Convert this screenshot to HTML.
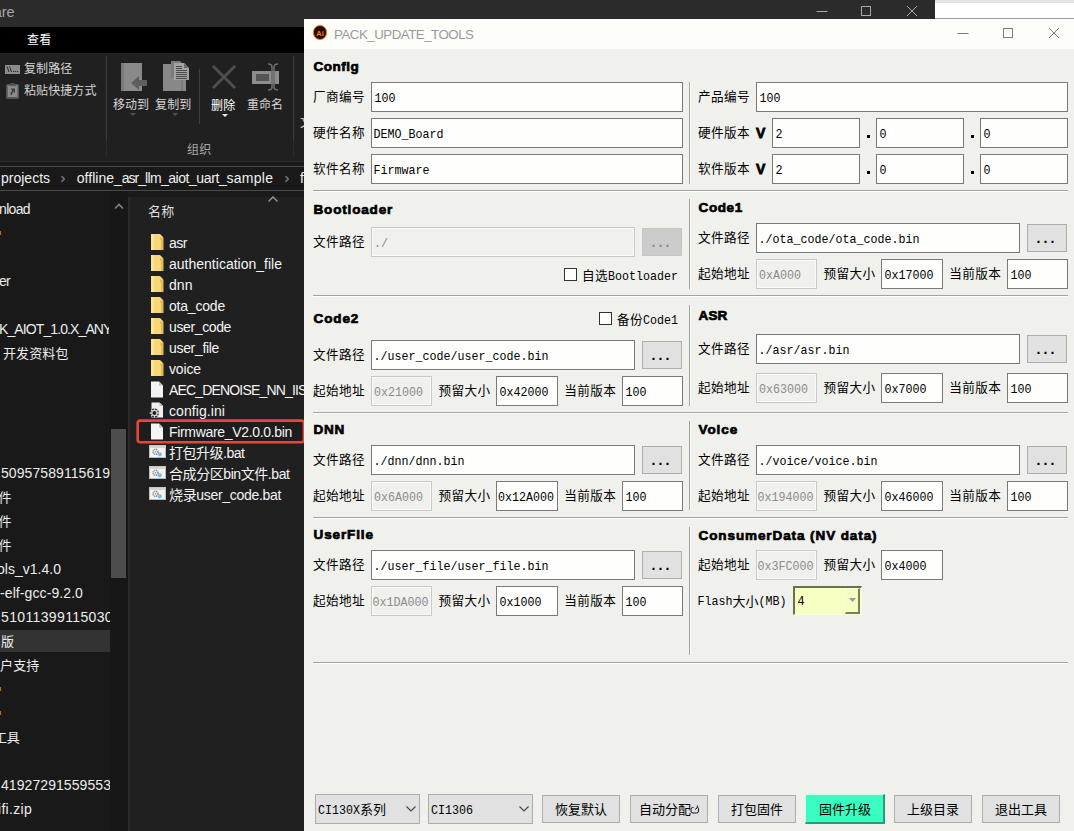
<!DOCTYPE html><html lang="zh-CN"><head><meta charset="utf-8"><title>PACK_UPDATE_TOOLS</title><style>
html,body{margin:0;padding:0}
body{width:1074px;height:831px;overflow:hidden;position:relative;background:#202020;font-family:"Liberation Sans","Noto Sans CJK SC",sans-serif}
.a{position:absolute;box-sizing:border-box}
.t{position:absolute;white-space:pre;line-height:20px;height:20px}
</style></head><body>
<div class="a" style="left:0px;top:0px;width:935px;height:27px;background:#2b2b2b;"></div>
<div class="a" style="left:935px;top:0px;width:139px;height:3px;background:#e4e4e4;"></div>
<div class="a" style="left:935px;top:3px;width:139px;height:15px;background:#ffffff;"></div>
<div class="a" style="left:935px;top:18px;width:139px;height:1px;background:#9b9b9b;"></div>
<div class="t" style="left:-6.3px;top:2.00px;font:400 14.5px/20px 'Liberation Sans','Noto Sans CJK SC',sans-serif;color:#a6a6a6;">are</div>
<svg class="a" style="left:800px;top:0" width="135" height="27" viewBox="0 0 135 27"><g stroke="#a8a8a8" stroke-width="1" fill="none"><path d="M16.5 11.5h11"/><rect x="61.5" y="6.5" width="9" height="9"/><path d="M107 6l10 10M117 6l-10 10"/></g></svg>
<div class="a" style="left:0px;top:27px;width:304px;height:26px;background:#000;"></div>
<div class="t" style="left:27px;top:30.00px;font:400 12px/20px 'Liberation Sans','Noto Sans CJK SC',sans-serif;color:#ffffff;letter-spacing:0.242px;">查看</div>
<div class="a" style="left:0px;top:53px;width:304px;height:108px;background:#202020;"></div>
<div class="a" style="left:0px;top:161px;width:304px;height:1px;background:#2d2d2d;"></div>
<div class="a" style="left:0px;top:162px;width:304px;height:29px;background:#191919;"></div>
<div class="a" style="left:0px;top:166px;width:304px;height:1px;background:#4a4a4a;"></div>
<div class="a" style="left:0px;top:190px;width:304px;height:1px;background:#4a4a4a;"></div>
<div class="a" style="left:106px;top:56px;width:1px;height:84px;background:#3d3d3d;"></div>
<div class="a" style="left:106px;top:140px;width:1px;height:17px;background:#2a2a2a;"></div>
<div class="a" style="left:199px;top:69px;width:1px;height:55px;background:#3d3d3d;"></div>
<div class="a" style="left:293px;top:56px;width:1px;height:84px;background:#3d3d3d;"></div>
<div class="a" style="left:293px;top:140px;width:1px;height:17px;background:#2a2a2a;"></div>
<svg class="a" style="left:5px;top:65px" width="15" height="9" viewBox="0 0 15 9"><rect width="15" height="9" fill="#8c8c8c"/><path d="M2 1.500l2 5.500M4.500 1.500l2 5.500" stroke="#2a2a2a" stroke-width="1"/><path d="M8 6.500h1.200M10 6.500h1.200M12 6.500h1.200" stroke="#2a2a2a" stroke-width="1.200"/></svg>
<div class="t" style="left:24px;top:59.00px;font:400 12px/20px 'Liberation Sans','Noto Sans CJK SC',sans-serif;color:#d6d6d6;letter-spacing:0.121px;">复制路径</div>
<svg class="a" style="left:6px;top:83px" width="14" height="16" viewBox="0 0 14 16"><rect x="0" y="1" width="13" height="15" rx="1.500" fill="#555"/><rect x="4" y="0" width="5" height="2" fill="#4a4a4a"/><rect x="1.700" y="2.200" width="9.700" height="11.800" fill="#8c8c8c"/><rect x="2.700" y="2.200" width="7.500" height="1" fill="#5a5a5a"/><path d="M4.500 5.500h4.500v4.500l-1.500-1.500-2 3.500-1.500-1 2.200-3.400z" fill="#3e3e3e"/></svg>
<div class="t" style="left:24px;top:81.00px;font:400 12px/20px 'Liberation Sans','Noto Sans CJK SC',sans-serif;color:#d6d6d6;letter-spacing:0.081px;">粘贴快捷方式</div>
<svg class="a" style="left:120px;top:60px" width="30" height="32" viewBox="0 0 30 32"><rect x="1" y="3" width="21" height="28" fill="#8a8a8a"/><rect x="1" y="3" width="3" height="28" fill="#7a7a7a"/><path d="M27 20v6h-8v4l-8-7 8-7v4z" fill="#5e5e5e"/></svg>
<div class="t" style="left:113px;top:95.00px;font:400 12px/20px 'Liberation Sans','Noto Sans CJK SC',sans-serif;color:#d6d6d6;letter-spacing:-0.005px;">移动到</div>
<svg class="a" style="left:130px;top:113px" width="7" height="4"><path d="M0 0h6l-3 3z" fill="#505050"/></svg>
<svg class="a" style="left:162px;top:59px" width="30" height="33" viewBox="0 0 30 33"><rect x="1" y="5" width="23" height="27" fill="#888"/><rect x="19.500" y="5" width="1" height="27" fill="#6e6e6e"/><path d="M9 2h9l4 4v13H9z" fill="#7c7c7c"/><path d="M12 4h10l5 5v12H12z" fill="#a2a2a2"/><path d="M22 4v5h5z" fill="#6a6a6a"/><g stroke="#4a4a4a" stroke-width="1"><path d="M14 7.500h6M14 9.500h6M14 11.500h11M14 13.500h11M14 15.500h11M14 17.500h11M14 19.500h11"/></g></svg>
<div class="t" style="left:155px;top:95.00px;font:400 12px/20px 'Liberation Sans','Noto Sans CJK SC',sans-serif;color:#d6d6d6;letter-spacing:0.161px;">复制到</div>
<svg class="a" style="left:172px;top:113px" width="7" height="4"><path d="M0 0h6l-3 3z" fill="#505050"/></svg>
<svg class="a" style="left:210px;top:63px" width="28" height="28" viewBox="0 0 28 28"><path d="M3 3l22 22M25 3L3 25" stroke="#4e4e4e" stroke-width="3" fill="none"/></svg>
<div class="t" style="left:211px;top:96.00px;font:400 12px/20px 'Liberation Sans','Noto Sans CJK SC',sans-serif;color:#ffffff;letter-spacing:0.242px;">删除</div>
<svg class="a" style="left:222px;top:114px" width="7" height="4"><path d="M0 0h6l-3 3z" fill="#f4f4f4"/></svg>
<svg class="a" style="left:250px;top:62px" width="32" height="30" viewBox="0 0 32 30"><rect x="2" y="9" width="27" height="13" fill="#8c8c8c"/><rect x="6" y="12" width="13" height="7" fill="#555"/><path d="M18 2q4 0 4 3v20q0 3-4 3M28 2q-4 0-4 3v20q0 3 4 3" stroke="#6c6c6c" stroke-width="1.6" fill="none"/></svg>
<div class="t" style="left:247px;top:95.00px;font:400 12px/20px 'Liberation Sans','Noto Sans CJK SC',sans-serif;color:#d6d6d6;letter-spacing:-0.005px;">重命名</div>
<div class="t" style="left:187px;top:140.00px;font:400 12px/20px 'Liberation Sans','Noto Sans CJK SC',sans-serif;color:#a8a8a8;letter-spacing:0.242px;">组织</div>
<div class="t" style="left:300px;top:113.00px;font:400 12px/20px 'Liberation Sans','Noto Sans CJK SC',sans-serif;color:#d6d6d6;width:4px;overflow:hidden;">文</div>
<div class="t" style="left:1px;top:168.00px;font:400 14px/20px 'Liberation Sans','Noto Sans CJK SC',sans-serif;color:#f0f0f0;">projects</div>
<svg class="a" style="left:60px;top:174px" width="7" height="10"><path d="M1.500 2.200l2.800 2.800-2.800 2.800" stroke="#777" stroke-width="1.500" fill="none"/></svg>
<div class="t" style="left:76.8px;top:168.00px;font:400 14px/20px 'Liberation Sans','Noto Sans CJK SC',sans-serif;color:#f0f0f0;letter-spacing:0.012px;">offline_</div>
<div class="t" style="left:121.8px;top:168.00px;font:400 14px/20px 'Liberation Sans','Noto Sans CJK SC',sans-serif;color:#f0f0f0;letter-spacing:-1.034px;">asr_</div>
<div class="t" style="left:144.9px;top:168.00px;font:400 14px/20px 'Liberation Sans','Noto Sans CJK SC',sans-serif;color:#f0f0f0;letter-spacing:-0.568px;">llm_</div>
<div class="t" style="left:168.3px;top:168.00px;font:400 14px/20px 'Liberation Sans','Noto Sans CJK SC',sans-serif;color:#f0f0f0;letter-spacing:-0.472px;">aiot_</div>
<div class="t" style="left:196.3px;top:168.00px;font:400 14px/20px 'Liberation Sans','Noto Sans CJK SC',sans-serif;color:#f0f0f0;letter-spacing:-0.364px;">uart_</div>
<div class="t" style="left:226.4px;top:168.00px;font:400 14px/20px 'Liberation Sans','Noto Sans CJK SC',sans-serif;color:#f0f0f0;letter-spacing:0.310px;">sample</div>
<svg class="a" style="left:284px;top:174px" width="7" height="10"><path d="M1.500 2.200l2.800 2.800-2.800 2.800" stroke="#777" stroke-width="1.500" fill="none"/></svg>
<div class="t" style="left:300px;top:168.00px;font:400 14px/20px 'Liberation Sans','Noto Sans CJK SC',sans-serif;color:#f0f0f0;width:4px;overflow:hidden;">f</div>
<div class="a" style="left:0px;top:191px;width:304px;height:6px;background:#191919;"></div>
<div class="a" style="left:0px;top:197px;width:128px;height:634px;background:#191919;"></div>
<div class="a" style="left:110px;top:191px;width:18px;height:640px;background:#171717;"></div>
<div class="a" style="left:128px;top:197px;width:2px;height:634px;background:#2a2a2a;"></div>
<div class="a" style="left:111px;top:429px;width:15px;height:149px;background:#4d4d4d;"></div>
<svg class="a" style="left:113px;top:202px" width="12" height="9"><path d="M2 6.500l4-4 4 4" stroke="#7e7e7e" stroke-width="1.700" fill="none"/></svg>
<div class="a" style="left:0px;top:630px;width:110px;height:22px;background:#333333;"></div>
<div class="t" style="left:-1px;top:199.00px;font:400 14px/20px 'Liberation Sans','Noto Sans CJK SC',sans-serif;color:#ececec;letter-spacing:-0.653px;">nload</div>
<div class="t" style="left:-1px;top:271.00px;font:400 14px/20px 'Liberation Sans','Noto Sans CJK SC',sans-serif;color:#ececec;letter-spacing:-0.727px;">er</div>
<div class="t" style="left:-1px;top:319.00px;font:400 14px/20px 'Liberation Sans','Noto Sans CJK SC',sans-serif;color:#ececec;letter-spacing:-0.896px;width:110px;overflow:hidden;">K_AIOT_1.0.X_ANY</div>
<div class="t" style="left:3px;top:344.00px;font:400 13px/20px 'Liberation Sans','Noto Sans CJK SC',sans-serif;color:#ececec;letter-spacing:0.097px;">开发资料包</div>
<div class="t" style="left:1px;top:463.00px;font:400 14px/20px 'Liberation Sans','Noto Sans CJK SC',sans-serif;color:#ececec;letter-spacing:0.074px;width:109px;overflow:hidden;">50957589115619</div>
<div class="t" style="left:-1.5px;top:488.00px;font:400 13px/20px 'Liberation Sans','Noto Sans CJK SC',sans-serif;color:#ececec;">件</div>
<div class="t" style="left:-1.5px;top:512.00px;font:400 13px/20px 'Liberation Sans','Noto Sans CJK SC',sans-serif;color:#ececec;">件</div>
<div class="t" style="left:-1.5px;top:536.00px;font:400 13px/20px 'Liberation Sans','Noto Sans CJK SC',sans-serif;color:#ececec;">件</div>
<div class="t" style="left:-3px;top:559.00px;font:400 14px/20px 'Liberation Sans','Noto Sans CJK SC',sans-serif;color:#ececec;letter-spacing:0.017px;">ols_v1.4.0</div>
<div class="t" style="left:0px;top:583.00px;font:400 14px/20px 'Liberation Sans','Noto Sans CJK SC',sans-serif;color:#ececec;letter-spacing:0.093px;">-elf-gcc-9.2.0</div>
<div class="t" style="left:1px;top:607.00px;font:400 14px/20px 'Liberation Sans','Noto Sans CJK SC',sans-serif;color:#ececec;letter-spacing:0.362px;width:109px;overflow:hidden;">51011399115030</div>
<div class="t" style="left:1px;top:632.00px;font:400 13px/20px 'Liberation Sans','Noto Sans CJK SC',sans-serif;color:#ececec;">版</div>
<div class="t" style="left:0px;top:656.00px;font:400 13px/20px 'Liberation Sans','Noto Sans CJK SC',sans-serif;color:#ececec;letter-spacing:0.161px;">户支持</div>
<div class="t" style="left:-6px;top:728.00px;font:400 13px/20px 'Liberation Sans','Noto Sans CJK SC',sans-serif;color:#ececec;letter-spacing:-0.258px;">工具</div>
<div class="t" style="left:1px;top:775.00px;font:400 14px/20px 'Liberation Sans','Noto Sans CJK SC',sans-serif;color:#ececec;letter-spacing:0.070px;width:109px;overflow:hidden;">41927291559553</div>
<div class="t" style="left:-2px;top:799.00px;font:400 14px/20px 'Liberation Sans','Noto Sans CJK SC',sans-serif;color:#ececec;letter-spacing:0.299px;">ifi.zip</div>
<div class="a" style="left:0px;top:231px;width:1px;height:4px;background:#c8690d;"></div>
<div class="a" style="left:0px;top:687px;width:1px;height:4px;background:#c8690d;"></div>
<div class="a" style="left:0px;top:711px;width:1px;height:4px;background:#c8690d;"></div>
<div class="a" style="left:0px;top:286px;width:0px;height:0px;"></div>
<div class="t" style="left:148px;top:202.20px;font:400 13px/20px 'Liberation Sans','Noto Sans CJK SC',sans-serif;color:#dedede;letter-spacing:0.242px;">名称</div>
<svg class="a" style="left:267px;top:195px" width="12" height="8"><path d="M1.5 6.500l4.5-4.500L10.500 6.500" stroke="#9a9a9a" stroke-width="1.300" fill="none"/></svg>
<svg class="a" style="left:134px;top:417px" width="172" height="29" viewBox="134 417 172 29"><rect x="137.700" y="420.600" width="166.200" height="21.700" rx="2.500" fill="#1d1d1d" stroke="#e8463d" stroke-width="2.600"/></svg>
<svg class="a" style="left:150px;top:234px" width="14" height="17" viewBox="0 0 14 17"><path d="M1 0h9l3 3v13H1z" fill="#f6d878"/><path d="M10 0v3.500h3.500V16H11V6H10z" fill="#e3bb4e"/><path d="M1 0h3v16H1z" fill="#fbe595"/></svg>
<div class="t" style="left:169px;top:233.00px;font:400 14px/20px 'Liberation Sans','Noto Sans CJK SC',sans-serif;color:#f4f4f4;letter-spacing:-0.484px;">asr</div>
<svg class="a" style="left:150px;top:255px" width="14" height="17" viewBox="0 0 14 17"><path d="M1 0h9l3 3v13H1z" fill="#f6d878"/><path d="M10 0v3.500h3.500V16H11V6H10z" fill="#e3bb4e"/><path d="M1 0h3v16H1z" fill="#fbe595"/></svg>
<div class="t" style="left:169px;top:254.00px;font:400 14px/20px 'Liberation Sans','Noto Sans CJK SC',sans-serif;color:#f4f4f4;letter-spacing:0.007px;">authentication_file</div>
<svg class="a" style="left:150px;top:276px" width="14" height="17" viewBox="0 0 14 17"><path d="M1 0h9l3 3v13H1z" fill="#f6d878"/><path d="M10 0v3.500h3.500V16H11V6H10z" fill="#e3bb4e"/><path d="M1 0h3v16H1z" fill="#fbe595"/></svg>
<div class="t" style="left:169px;top:275.00px;font:400 14px/20px 'Liberation Sans','Noto Sans CJK SC',sans-serif;color:#f4f4f4;letter-spacing:0.047px;">dnn</div>
<svg class="a" style="left:150px;top:297px" width="14" height="17" viewBox="0 0 14 17"><path d="M1 0h9l3 3v13H1z" fill="#f6d878"/><path d="M10 0v3.500h3.500V16H11V6H10z" fill="#e3bb4e"/><path d="M1 0h3v16H1z" fill="#fbe595"/></svg>
<div class="t" style="left:169px;top:296.00px;font:400 14px/20px 'Liberation Sans','Noto Sans CJK SC',sans-serif;color:#f4f4f4;letter-spacing:-0.201px;">ota_code</div>
<svg class="a" style="left:150px;top:318px" width="14" height="17" viewBox="0 0 14 17"><path d="M1 0h9l3 3v13H1z" fill="#f6d878"/><path d="M10 0v3.500h3.500V16H11V6H10z" fill="#e3bb4e"/><path d="M1 0h3v16H1z" fill="#fbe595"/></svg>
<div class="t" style="left:169px;top:317.00px;font:400 14px/20px 'Liberation Sans','Noto Sans CJK SC',sans-serif;color:#f4f4f4;letter-spacing:-0.377px;">user_code</div>
<svg class="a" style="left:150px;top:339px" width="14" height="17" viewBox="0 0 14 17"><path d="M1 0h9l3 3v13H1z" fill="#f6d878"/><path d="M10 0v3.500h3.500V16H11V6H10z" fill="#e3bb4e"/><path d="M1 0h3v16H1z" fill="#fbe595"/></svg>
<div class="t" style="left:169px;top:338.00px;font:400 14px/20px 'Liberation Sans','Noto Sans CJK SC',sans-serif;color:#f4f4f4;letter-spacing:-0.325px;">user_file</div>
<svg class="a" style="left:150px;top:360px" width="14" height="17" viewBox="0 0 14 17"><path d="M1 0h9l3 3v13H1z" fill="#f6d878"/><path d="M10 0v3.500h3.500V16H11V6H10z" fill="#e3bb4e"/><path d="M1 0h3v16H1z" fill="#fbe595"/></svg>
<div class="t" style="left:169px;top:359.00px;font:400 14px/20px 'Liberation Sans','Noto Sans CJK SC',sans-serif;color:#f4f4f4;letter-spacing:-0.138px;">voice</div>
<svg class="a" style="left:150px;top:381px" width="14" height="17" viewBox="0 0 14 17"><path d="M1 0.500h8l4 4V16.500H1z" fill="#f4f4f4"/><path d="M9 0.500v4h4z" fill="#bdbdbd"/></svg>
<div class="t" style="left:169px;top:380.00px;font:400 14px/20px 'Liberation Sans','Noto Sans CJK SC',sans-serif;color:#f4f4f4;letter-spacing:-0.833px;width:135px;overflow:hidden;">AEC_DENOISE_NN_IIS</div>
<svg class="a" style="left:147px;top:402px" width="18" height="17" viewBox="0 0 18 17"><path d="M4.500 0.500h8l3.500 3.500V15.500H4.500z" fill="#f0f0f0"/><path d="M12.500 0.500v3.500h3.500z" fill="#bdbdbd"/><circle cx="7.400" cy="11" r="4.600" fill="#202020"/><circle cx="7.400" cy="11" r="2.600" fill="none" stroke="#d4d4d4" stroke-width="1.300"/><path d="M7.400 6.300v2M7.400 13.700v2M2.700 11h2M10.100 11h2M4.100 7.700l1.400 1.400M9.300 12.900l1.400 1.400M10.700 7.700l-1.400 1.400M5.500 12.900l-1.400 1.400" stroke="#d4d4d4" stroke-width="1.300"/></svg>
<div class="t" style="left:169px;top:401.00px;font:400 14px/20px 'Liberation Sans','Noto Sans CJK SC',sans-serif;color:#f4f4f4;letter-spacing:0.073px;">config.ini</div>
<svg class="a" style="left:150px;top:423px" width="14" height="17" viewBox="0 0 14 17"><path d="M1 0.500h8l4 4V16.500H1z" fill="#f4f4f4"/><path d="M9 0.500v4h4z" fill="#bdbdbd"/></svg>
<div class="t" style="left:169px;top:422.00px;font:400 14px/20px 'Liberation Sans','Noto Sans CJK SC',sans-serif;color:#f4f4f4;letter-spacing:-0.325px;">Firmware_V2.0.0.bin</div>
<svg class="a" style="left:149px;top:445px" width="17" height="13" viewBox="0 0 17 13"><rect x="0.500" y="0.500" width="16" height="12" fill="#f3f3f3" stroke="#bcbcbc"/><rect x="0.500" y="0.500" width="16" height="2.500" fill="#d4d4d4"/><circle cx="6.500" cy="6.800" r="2.500" fill="none" stroke="#8e8e8e" stroke-width="1.500" stroke-dasharray="1.300 0.700"/><circle cx="6.500" cy="6.800" r="0.800" fill="#8e8e8e"/><circle cx="10.800" cy="9.300" r="2.100" fill="#79bdec"/></svg>
<div class="t" style="left:169px;top:443.00px;font:400 14px/20px 'Liberation Sans','Noto Sans CJK SC',sans-serif;color:#f4f4f4;letter-spacing:-0.482px;">打包升级.bat</div>
<svg class="a" style="left:149px;top:466px" width="17" height="13" viewBox="0 0 17 13"><rect x="0.500" y="0.500" width="16" height="12" fill="#f3f3f3" stroke="#bcbcbc"/><rect x="0.500" y="0.500" width="16" height="2.500" fill="#d4d4d4"/><circle cx="6.500" cy="6.800" r="2.500" fill="none" stroke="#8e8e8e" stroke-width="1.500" stroke-dasharray="1.300 0.700"/><circle cx="6.500" cy="6.800" r="0.800" fill="#8e8e8e"/><circle cx="10.800" cy="9.300" r="2.100" fill="#79bdec"/></svg>
<div class="t" style="left:169px;top:464.00px;font:400 14px/20px 'Liberation Sans','Noto Sans CJK SC',sans-serif;color:#f4f4f4;letter-spacing:-0.427px;">合成分区bin文件.bat</div>
<svg class="a" style="left:149px;top:487px" width="17" height="13" viewBox="0 0 17 13"><rect x="0.500" y="0.500" width="16" height="12" fill="#f3f3f3" stroke="#bcbcbc"/><rect x="0.500" y="0.500" width="16" height="2.500" fill="#d4d4d4"/><circle cx="6.500" cy="6.800" r="2.500" fill="none" stroke="#8e8e8e" stroke-width="1.500" stroke-dasharray="1.300 0.700"/><circle cx="6.500" cy="6.800" r="0.800" fill="#8e8e8e"/><circle cx="10.800" cy="9.300" r="2.100" fill="#79bdec"/></svg>
<div class="t" style="left:169px;top:485.00px;font:400 14px/20px 'Liberation Sans','Noto Sans CJK SC',sans-serif;color:#f4f4f4;letter-spacing:-0.316px;">烧录user_code.bat</div>
<div class="a" style="left:304px;top:19px;width:770px;height:30px;background:#fdfdfa;"></div>
<div class="a" style="left:304px;top:49px;width:770px;height:782px;background:#f0f0ed;"></div>
<div class="a" style="left:312.700px;top:25.400px;width:14.500px;height:14.500px;border-radius:50%;background:#230b00;border:1.300px solid #ff7a00;"></div>
<div class="t" style="left:316.3px;top:24.20px;font:700 7.5px/20px 'Liberation Sans',sans-serif;color:#ff7f0a;">Ai</div>
<div class="t" style="left:334px;top:24.60px;font:400 13.33px/20px 'Liberation Sans','Noto Sans CJK SC',sans-serif;color:#9a9a9a;letter-spacing:-0.508px;">PACK_UPDATE_TOOLS</div>
<svg class="a" style="left:940px;top:19px" width="134" height="30" viewBox="0 0 134 30"><g stroke="#7d7d7d" stroke-width="1" fill="none"><path d="M17.500 14.500h11"/><rect x="63.500" y="9.500" width="9" height="9"/><path d="M109 9l10 10M119 9l-10 10"/></g></svg>
<div class="t" style="left:313.5px;top:57.40px;font:700 13.5px/20px 'Liberation Sans',sans-serif;color:#000;letter-spacing:0.525px;-webkit-text-stroke:0.700px #000;">Config</div>
<div class="t" style="left:313px;top:88.30px;font:400 12.6px/20px 'Liberation Mono','Noto Sans CJK SC',monospace;color:#000;letter-spacing:0.406px;">厂商编号</div>
<div class="a" style="left:371px;top:82px;width:312px;height:30px;background:#fefefc;border:1px solid #7a7a7a;"></div>
<div class="t" style="left:374.5px;top:88.60px;font:400 11.67px/20px 'Liberation Mono','Noto Sans CJK SC',monospace;color:#000;transform:scaleY(1.16);transform-origin:0 13.00px;">100</div>
<div class="t" style="left:313px;top:124.30px;font:400 12.6px/20px 'Liberation Mono','Noto Sans CJK SC',monospace;color:#000;letter-spacing:0.406px;">硬件名称</div>
<div class="a" style="left:371px;top:118px;width:312px;height:30px;background:#fefefc;border:1px solid #7a7a7a;"></div>
<div class="t" style="left:373.5px;top:124.60px;font:400 11.67px/20px 'Liberation Mono','Noto Sans CJK SC',monospace;color:#000;letter-spacing:0.005px;transform:scaleY(1.16);transform-origin:0 13.00px;">DEMO_Board</div>
<div class="t" style="left:313px;top:160.30px;font:400 12.6px/20px 'Liberation Mono','Noto Sans CJK SC',monospace;color:#000;letter-spacing:0.406px;">软件名称</div>
<div class="a" style="left:371px;top:154px;width:312px;height:30px;background:#fefefc;border:1px solid #7a7a7a;"></div>
<div class="t" style="left:373.5px;top:160.60px;font:400 11.67px/20px 'Liberation Mono','Noto Sans CJK SC',monospace;color:#000;transform:scaleY(1.16);transform-origin:0 13.00px;">Firmware</div>
<div class="a" style="left:689px;top:82px;width:1px;height:102px;background:#a3a3a3;"></div>
<div class="a" style="left:690px;top:82px;width:1px;height:102px;background:#ffffff;"></div>
<div class="t" style="left:698px;top:88.30px;font:400 12.6px/20px 'Liberation Mono','Noto Sans CJK SC',monospace;color:#000;letter-spacing:0.406px;">产品编号</div>
<div class="a" style="left:756px;top:82px;width:312px;height:30px;background:#fefefc;border:1px solid #7a7a7a;"></div>
<div class="t" style="left:759.5px;top:88.60px;font:400 11.67px/20px 'Liberation Mono','Noto Sans CJK SC',monospace;color:#000;transform:scaleY(1.16);transform-origin:0 13.00px;">100</div>
<div class="t" style="left:698px;top:124.30px;font:400 12.6px/20px 'Liberation Mono','Noto Sans CJK SC',monospace;color:#000;letter-spacing:0.406px;">硬件版本</div>
<div class="t" style="left:756px;top:122.60px;font:700 14px/20px 'Liberation Sans',sans-serif;color:#000;letter-spacing:1.156px;-webkit-text-stroke:0.800px #000;">V</div>
<div class="a" style="left:772px;top:118px;width:88px;height:30px;background:#fefefc;border:1px solid #7a7a7a;"></div>
<div class="t" style="left:775.5px;top:124.60px;font:400 11.67px/20px 'Liberation Mono','Noto Sans CJK SC',monospace;color:#000;transform:scaleY(1.16);transform-origin:0 13.00px;">2</div>
<div class="a" style="left:876px;top:118px;width:88px;height:30px;background:#fefefc;border:1px solid #7a7a7a;"></div>
<div class="t" style="left:879.5px;top:124.60px;font:400 11.67px/20px 'Liberation Mono','Noto Sans CJK SC',monospace;color:#000;transform:scaleY(1.16);transform-origin:0 13.00px;">0</div>
<div class="a" style="left:980px;top:118px;width:88px;height:30px;background:#fefefc;border:1px solid #7a7a7a;"></div>
<div class="t" style="left:983.5px;top:124.60px;font:400 11.67px/20px 'Liberation Mono','Noto Sans CJK SC',monospace;color:#000;transform:scaleY(1.16);transform-origin:0 13.00px;">0</div>
<div class="a" style="left:867px;top:135px;width:3px;height:3px;background:#000;"></div>
<div class="a" style="left:971px;top:135px;width:3px;height:3px;background:#000;"></div>
<div class="t" style="left:698px;top:160.30px;font:400 12.6px/20px 'Liberation Mono','Noto Sans CJK SC',monospace;color:#000;letter-spacing:0.406px;">软件版本</div>
<div class="t" style="left:756px;top:158.60px;font:700 14px/20px 'Liberation Sans',sans-serif;color:#000;letter-spacing:1.156px;-webkit-text-stroke:0.800px #000;">V</div>
<div class="a" style="left:772px;top:154px;width:88px;height:30px;background:#fefefc;border:1px solid #7a7a7a;"></div>
<div class="t" style="left:775.5px;top:160.60px;font:400 11.67px/20px 'Liberation Mono','Noto Sans CJK SC',monospace;color:#000;transform:scaleY(1.16);transform-origin:0 13.00px;">2</div>
<div class="a" style="left:876px;top:154px;width:88px;height:30px;background:#fefefc;border:1px solid #7a7a7a;"></div>
<div class="t" style="left:879.5px;top:160.60px;font:400 11.67px/20px 'Liberation Mono','Noto Sans CJK SC',monospace;color:#000;transform:scaleY(1.16);transform-origin:0 13.00px;">0</div>
<div class="a" style="left:980px;top:154px;width:88px;height:30px;background:#fefefc;border:1px solid #7a7a7a;"></div>
<div class="t" style="left:983.5px;top:160.60px;font:400 11.67px/20px 'Liberation Mono','Noto Sans CJK SC',monospace;color:#000;transform:scaleY(1.16);transform-origin:0 13.00px;">0</div>
<div class="a" style="left:867px;top:171px;width:3px;height:3px;background:#000;"></div>
<div class="a" style="left:971px;top:171px;width:3px;height:3px;background:#000;"></div>
<div class="a" style="left:313px;top:190px;width:755px;height:1px;background:#a3a3a3;"></div>
<div class="a" style="left:313px;top:191px;width:755px;height:1px;background:#ffffff;"></div>
<div class="t" style="left:313.5px;top:200.40px;font:700 13.5px/20px 'Liberation Sans',sans-serif;color:#000;letter-spacing:0.833px;-webkit-text-stroke:0.700px #000;">Bootloader</div>
<div class="t" style="left:313px;top:233.00px;font:400 12.6px/20px 'Liberation Mono','Noto Sans CJK SC',monospace;color:#000;letter-spacing:0.406px;">文件路径</div>
<div class="a" style="left:371px;top:227px;width:264px;height:30px;background:#f0f0ed;border:1px solid #c9c9c9;box-shadow:inset 0 0 0 1px #fafaf8;"></div>
<div class="t" style="left:374px;top:233.60px;font:400 11.67px/20px 'Liberation Mono','Noto Sans CJK SC',monospace;color:#8c8c8c;transform:scaleY(1.16);transform-origin:0 13.00px;">./</div>
<div class="a" style="left:642px;top:228px;width:40px;height:28px;background:#cccccc;border:1px solid #c6c6c6;"></div>
<div class="t" style="left:649.2px;top:232.50px;font:700 14px/20px 'Liberation Mono','Noto Sans CJK SC',monospace;color:#8a8a8a;letter-spacing:-1.406px;">...</div>
<div class="a" style="left:564px;top:268px;width:13px;height:13px;background:#ffffff;border:1px solid #333333;"></div>
<div class="t" style="left:582px;top:266.80px;font:400 12.6px/20px 'Liberation Mono','Noto Sans CJK SC',monospace;color:#000;letter-spacing:0.406px;">自选</div>
<div class="t" style="left:608px;top:266.60px;font:400 11.67px/20px 'Liberation Mono','Noto Sans CJK SC',monospace;color:#000;letter-spacing:0.005px;transform:scaleY(1.16);transform-origin:0 13.00px;">Bootloader</div>
<div class="a" style="left:689px;top:199px;width:1px;height:90px;background:#a3a3a3;"></div>
<div class="a" style="left:690px;top:199px;width:1px;height:90px;background:#ffffff;"></div>
<div class="a" style="left:313px;top:295px;width:755px;height:1px;background:#a3a3a3;"></div>
<div class="a" style="left:313px;top:296px;width:755px;height:1px;background:#ffffff;"></div>
<div class="t" style="left:698.5px;top:198.20px;font:700 13.5px/20px 'Liberation Sans',sans-serif;color:#000;letter-spacing:0.627px;-webkit-text-stroke:0.700px #000;">Code1</div>
<div class="t" style="left:698px;top:229.30px;font:400 12.6px/20px 'Liberation Mono','Noto Sans CJK SC',monospace;color:#000;letter-spacing:0.406px;">文件路径</div>
<div class="a" style="left:756px;top:223px;width:264px;height:30px;background:#fefefc;border:1px solid #7a7a7a;"></div>
<div class="t" style="left:758.5px;top:229.60px;font:400 11.67px/20px 'Liberation Mono','Noto Sans CJK SC',monospace;color:#000;letter-spacing:0.005px;transform:scaleY(1.16);transform-origin:0 13.00px;">./ota_code/ota_code.bin</div>
<div class="a" style="left:1027px;top:224px;width:40px;height:28px;background:#e1e1e1;border:1px solid #adadad;"></div>
<div class="t" style="left:1034.2px;top:228.50px;font:700 14px/20px 'Liberation Mono','Noto Sans CJK SC',monospace;color:#000;letter-spacing:-1.406px;">...</div>
<div class="t" style="left:698px;top:265.30px;font:400 12.6px/20px 'Liberation Mono','Noto Sans CJK SC',monospace;color:#000;letter-spacing:0.406px;">起始地址</div>
<div class="a" style="left:756px;top:259px;width:61px;height:30px;background:#f0f0ed;border:1px solid #c9c9c9;box-shadow:inset 0 0 0 1px #fafaf8;"></div>
<div class="t" style="left:759px;top:265.60px;font:400 11.67px/20px 'Liberation Mono','Noto Sans CJK SC',monospace;color:#8c8c8c;transform:scaleY(1.16);transform-origin:0 13.00px;">0xA000</div>
<div class="t" style="left:823.5px;top:265.30px;font:400 12.6px/20px 'Liberation Mono','Noto Sans CJK SC',monospace;color:#000;letter-spacing:0.406px;">预留大小</div>
<div class="a" style="left:881px;top:259px;width:62px;height:30px;background:#fefefc;border:1px solid #7a7a7a;"></div>
<div class="t" style="left:884.5px;top:265.60px;font:400 11.67px/20px 'Liberation Mono','Noto Sans CJK SC',monospace;color:#000;letter-spacing:0.004px;transform:scaleY(1.16);transform-origin:0 13.00px;">0x17000</div>
<div class="t" style="left:949.3px;top:265.30px;font:400 12.6px/20px 'Liberation Mono','Noto Sans CJK SC',monospace;color:#000;letter-spacing:0.406px;">当前版本</div>
<div class="a" style="left:1007px;top:259px;width:61px;height:30px;background:#fefefc;border:1px solid #7a7a7a;"></div>
<div class="t" style="left:1010.5px;top:265.60px;font:400 11.67px/20px 'Liberation Mono','Noto Sans CJK SC',monospace;color:#000;transform:scaleY(1.16);transform-origin:0 13.00px;">100</div>
<div class="t" style="left:313.5px;top:308.90px;font:700 13.5px/20px 'Liberation Sans',sans-serif;color:#000;letter-spacing:0.887px;-webkit-text-stroke:0.700px #000;">Code2</div>
<div class="t" style="left:313px;top:346.30px;font:400 12.6px/20px 'Liberation Mono','Noto Sans CJK SC',monospace;color:#000;letter-spacing:0.406px;">文件路径</div>
<div class="a" style="left:371px;top:340px;width:264px;height:30px;background:#fefefc;border:1px solid #7a7a7a;"></div>
<div class="t" style="left:373.5px;top:346.60px;font:400 11.67px/20px 'Liberation Mono','Noto Sans CJK SC',monospace;color:#000;letter-spacing:0.005px;transform:scaleY(1.16);transform-origin:0 13.00px;">./user_code/user_code.bin</div>
<div class="a" style="left:642px;top:341px;width:40px;height:28px;background:#e1e1e1;border:1px solid #adadad;"></div>
<div class="t" style="left:649.2px;top:345.50px;font:700 14px/20px 'Liberation Mono','Noto Sans CJK SC',monospace;color:#000;letter-spacing:-1.406px;">...</div>
<div class="t" style="left:313px;top:382.30px;font:400 12.6px/20px 'Liberation Mono','Noto Sans CJK SC',monospace;color:#000;letter-spacing:0.406px;">起始地址</div>
<div class="a" style="left:371px;top:376px;width:61px;height:30px;background:#f0f0ed;border:1px solid #c9c9c9;box-shadow:inset 0 0 0 1px #fafaf8;"></div>
<div class="t" style="left:374px;top:382.60px;font:400 11.67px/20px 'Liberation Mono','Noto Sans CJK SC',monospace;color:#8c8c8c;letter-spacing:0.004px;transform:scaleY(1.16);transform-origin:0 13.00px;">0x21000</div>
<div class="t" style="left:438.5px;top:382.30px;font:400 12.6px/20px 'Liberation Mono','Noto Sans CJK SC',monospace;color:#000;letter-spacing:0.406px;">预留大小</div>
<div class="a" style="left:496px;top:376px;width:62px;height:30px;background:#fefefc;border:1px solid #7a7a7a;"></div>
<div class="t" style="left:499.5px;top:382.60px;font:400 11.67px/20px 'Liberation Mono','Noto Sans CJK SC',monospace;color:#000;letter-spacing:0.004px;transform:scaleY(1.16);transform-origin:0 13.00px;">0x42000</div>
<div class="t" style="left:564.3px;top:382.30px;font:400 12.6px/20px 'Liberation Mono','Noto Sans CJK SC',monospace;color:#000;letter-spacing:0.406px;">当前版本</div>
<div class="a" style="left:622px;top:376px;width:61px;height:30px;background:#fefefc;border:1px solid #7a7a7a;"></div>
<div class="t" style="left:625.5px;top:382.60px;font:400 11.67px/20px 'Liberation Mono','Noto Sans CJK SC',monospace;color:#000;transform:scaleY(1.16);transform-origin:0 13.00px;">100</div>
<div class="a" style="left:599px;top:312px;width:13px;height:13px;background:#ffffff;border:1px solid #333333;"></div>
<div class="t" style="left:617px;top:310.80px;font:400 12.6px/20px 'Liberation Mono','Noto Sans CJK SC',monospace;color:#000;letter-spacing:0.406px;">备份</div>
<div class="t" style="left:643px;top:310.60px;font:400 11.67px/20px 'Liberation Mono','Noto Sans CJK SC',monospace;color:#000;transform:scaleY(1.16);transform-origin:0 13.00px;">Code1</div>
<div class="a" style="left:689px;top:305px;width:1px;height:101px;background:#a3a3a3;"></div>
<div class="a" style="left:690px;top:305px;width:1px;height:101px;background:#ffffff;"></div>
<div class="a" style="left:313px;top:412px;width:755px;height:1px;background:#a3a3a3;"></div>
<div class="a" style="left:313px;top:413px;width:755px;height:1px;background:#ffffff;"></div>
<div class="t" style="left:698.5px;top:306.20px;font:700 13.5px/20px 'Liberation Sans',sans-serif;color:#000;letter-spacing:0.161px;-webkit-text-stroke:0.700px #000;">ASR</div>
<div class="t" style="left:698px;top:340.30px;font:400 12.6px/20px 'Liberation Mono','Noto Sans CJK SC',monospace;color:#000;letter-spacing:0.406px;">文件路径</div>
<div class="a" style="left:756px;top:334px;width:264px;height:30px;background:#fefefc;border:1px solid #7a7a7a;"></div>
<div class="t" style="left:758.5px;top:340.60px;font:400 11.67px/20px 'Liberation Mono','Noto Sans CJK SC',monospace;color:#000;letter-spacing:0.005px;transform:scaleY(1.16);transform-origin:0 13.00px;">./asr/asr.bin</div>
<div class="a" style="left:1027px;top:335px;width:40px;height:28px;background:#e1e1e1;border:1px solid #adadad;"></div>
<div class="t" style="left:1034.2px;top:339.50px;font:700 14px/20px 'Liberation Mono','Noto Sans CJK SC',monospace;color:#000;letter-spacing:-1.406px;">...</div>
<div class="t" style="left:698px;top:379.30px;font:400 12.6px/20px 'Liberation Mono','Noto Sans CJK SC',monospace;color:#000;letter-spacing:0.406px;">起始地址</div>
<div class="a" style="left:756px;top:373px;width:61px;height:30px;background:#f0f0ed;border:1px solid #c9c9c9;box-shadow:inset 0 0 0 1px #fafaf8;"></div>
<div class="t" style="left:759px;top:379.60px;font:400 11.67px/20px 'Liberation Mono','Noto Sans CJK SC',monospace;color:#8c8c8c;letter-spacing:0.004px;transform:scaleY(1.16);transform-origin:0 13.00px;">0x63000</div>
<div class="t" style="left:823.5px;top:379.30px;font:400 12.6px/20px 'Liberation Mono','Noto Sans CJK SC',monospace;color:#000;letter-spacing:0.406px;">预留大小</div>
<div class="a" style="left:881px;top:373px;width:62px;height:30px;background:#fefefc;border:1px solid #7a7a7a;"></div>
<div class="t" style="left:884.5px;top:379.60px;font:400 11.67px/20px 'Liberation Mono','Noto Sans CJK SC',monospace;color:#000;transform:scaleY(1.16);transform-origin:0 13.00px;">0x7000</div>
<div class="t" style="left:949.3px;top:379.30px;font:400 12.6px/20px 'Liberation Mono','Noto Sans CJK SC',monospace;color:#000;letter-spacing:0.406px;">当前版本</div>
<div class="a" style="left:1007px;top:373px;width:61px;height:30px;background:#fefefc;border:1px solid #7a7a7a;"></div>
<div class="t" style="left:1010.5px;top:379.60px;font:400 11.67px/20px 'Liberation Mono','Noto Sans CJK SC',monospace;color:#000;transform:scaleY(1.16);transform-origin:0 13.00px;">100</div>
<div class="t" style="left:313.5px;top:419.90px;font:700 13.5px/20px 'Liberation Sans',sans-serif;color:#000;letter-spacing:0.783px;-webkit-text-stroke:0.700px #000;">DNN</div>
<div class="t" style="left:313px;top:451.30px;font:400 12.6px/20px 'Liberation Mono','Noto Sans CJK SC',monospace;color:#000;letter-spacing:0.406px;">文件路径</div>
<div class="a" style="left:371px;top:445px;width:264px;height:30px;background:#fefefc;border:1px solid #7a7a7a;"></div>
<div class="t" style="left:373.5px;top:451.60px;font:400 11.67px/20px 'Liberation Mono','Noto Sans CJK SC',monospace;color:#000;letter-spacing:0.005px;transform:scaleY(1.16);transform-origin:0 13.00px;">./dnn/dnn.bin</div>
<div class="a" style="left:642px;top:446px;width:40px;height:28px;background:#e1e1e1;border:1px solid #adadad;"></div>
<div class="t" style="left:649.2px;top:450.50px;font:700 14px/20px 'Liberation Mono','Noto Sans CJK SC',monospace;color:#000;letter-spacing:-1.406px;">...</div>
<div class="t" style="left:313px;top:487.30px;font:400 12.6px/20px 'Liberation Mono','Noto Sans CJK SC',monospace;color:#000;letter-spacing:0.406px;">起始地址</div>
<div class="a" style="left:371px;top:481px;width:61px;height:30px;background:#f0f0ed;border:1px solid #c9c9c9;box-shadow:inset 0 0 0 1px #fafaf8;"></div>
<div class="t" style="left:374px;top:487.60px;font:400 11.67px/20px 'Liberation Mono','Noto Sans CJK SC',monospace;color:#8c8c8c;letter-spacing:0.004px;transform:scaleY(1.16);transform-origin:0 13.00px;">0x6A000</div>
<div class="t" style="left:438.5px;top:487.30px;font:400 12.6px/20px 'Liberation Mono','Noto Sans CJK SC',monospace;color:#000;letter-spacing:0.406px;">预留大小</div>
<div class="a" style="left:496px;top:481px;width:62px;height:30px;background:#fefefc;border:1px solid #7a7a7a;"></div>
<div class="t" style="left:498px;top:487.60px;font:400 11.67px/20px 'Liberation Mono','Noto Sans CJK SC',monospace;color:#000;transform:scaleY(1.16);transform-origin:0 13.00px;">0x12A000</div>
<div class="t" style="left:564.3px;top:487.30px;font:400 12.6px/20px 'Liberation Mono','Noto Sans CJK SC',monospace;color:#000;letter-spacing:0.406px;">当前版本</div>
<div class="a" style="left:622px;top:481px;width:61px;height:30px;background:#fefefc;border:1px solid #7a7a7a;"></div>
<div class="t" style="left:625.5px;top:487.60px;font:400 11.67px/20px 'Liberation Mono','Noto Sans CJK SC',monospace;color:#000;transform:scaleY(1.16);transform-origin:0 13.00px;">100</div>
<div class="a" style="left:689px;top:421px;width:1px;height:89px;background:#a3a3a3;"></div>
<div class="a" style="left:690px;top:421px;width:1px;height:89px;background:#ffffff;"></div>
<div class="a" style="left:313px;top:517px;width:755px;height:1px;background:#a3a3a3;"></div>
<div class="a" style="left:313px;top:518px;width:755px;height:1px;background:#ffffff;"></div>
<div class="t" style="left:698.5px;top:420.40px;font:700 13.5px/20px 'Liberation Sans',sans-serif;color:#000;letter-spacing:0.917px;-webkit-text-stroke:0.700px #000;">Voice</div>
<div class="t" style="left:698px;top:451.30px;font:400 12.6px/20px 'Liberation Mono','Noto Sans CJK SC',monospace;color:#000;letter-spacing:0.406px;">文件路径</div>
<div class="a" style="left:756px;top:445px;width:264px;height:30px;background:#fefefc;border:1px solid #7a7a7a;"></div>
<div class="t" style="left:758.5px;top:451.60px;font:400 11.67px/20px 'Liberation Mono','Noto Sans CJK SC',monospace;color:#000;letter-spacing:0.005px;transform:scaleY(1.16);transform-origin:0 13.00px;">./voice/voice.bin</div>
<div class="a" style="left:1027px;top:446px;width:40px;height:28px;background:#e1e1e1;border:1px solid #adadad;"></div>
<div class="t" style="left:1034.2px;top:450.50px;font:700 14px/20px 'Liberation Mono','Noto Sans CJK SC',monospace;color:#000;letter-spacing:-1.406px;">...</div>
<div class="t" style="left:698px;top:487.30px;font:400 12.6px/20px 'Liberation Mono','Noto Sans CJK SC',monospace;color:#000;letter-spacing:0.406px;">起始地址</div>
<div class="a" style="left:756px;top:481px;width:61px;height:30px;background:#f0f0ed;border:1px solid #c9c9c9;box-shadow:inset 0 0 0 1px #fafaf8;"></div>
<div class="t" style="left:757.5px;top:487.60px;font:400 11.67px/20px 'Liberation Mono','Noto Sans CJK SC',monospace;color:#8c8c8c;transform:scaleY(1.16);transform-origin:0 13.00px;">0x194000</div>
<div class="t" style="left:823.5px;top:487.30px;font:400 12.6px/20px 'Liberation Mono','Noto Sans CJK SC',monospace;color:#000;letter-spacing:0.406px;">预留大小</div>
<div class="a" style="left:881px;top:481px;width:62px;height:30px;background:#fefefc;border:1px solid #7a7a7a;"></div>
<div class="t" style="left:884.5px;top:487.60px;font:400 11.67px/20px 'Liberation Mono','Noto Sans CJK SC',monospace;color:#000;letter-spacing:0.004px;transform:scaleY(1.16);transform-origin:0 13.00px;">0x46000</div>
<div class="t" style="left:949.3px;top:487.30px;font:400 12.6px/20px 'Liberation Mono','Noto Sans CJK SC',monospace;color:#000;letter-spacing:0.406px;">当前版本</div>
<div class="a" style="left:1007px;top:481px;width:61px;height:30px;background:#fefefc;border:1px solid #7a7a7a;"></div>
<div class="t" style="left:1010.5px;top:487.60px;font:400 11.67px/20px 'Liberation Mono','Noto Sans CJK SC',monospace;color:#000;transform:scaleY(1.16);transform-origin:0 13.00px;">100</div>
<div class="t" style="left:313.5px;top:525.40px;font:700 13.5px/20px 'Liberation Sans',sans-serif;color:#000;letter-spacing:0.877px;-webkit-text-stroke:0.700px #000;">UserFile</div>
<div class="t" style="left:313px;top:556.30px;font:400 12.6px/20px 'Liberation Mono','Noto Sans CJK SC',monospace;color:#000;letter-spacing:0.406px;">文件路径</div>
<div class="a" style="left:371px;top:550px;width:264px;height:30px;background:#fefefc;border:1px solid #7a7a7a;"></div>
<div class="t" style="left:373.5px;top:556.60px;font:400 11.67px/20px 'Liberation Mono','Noto Sans CJK SC',monospace;color:#000;letter-spacing:0.005px;transform:scaleY(1.16);transform-origin:0 13.00px;">./user_file/user_file.bin</div>
<div class="a" style="left:642px;top:551px;width:40px;height:28px;background:#e1e1e1;border:1px solid #adadad;"></div>
<div class="t" style="left:649.2px;top:555.50px;font:700 14px/20px 'Liberation Mono','Noto Sans CJK SC',monospace;color:#000;letter-spacing:-1.406px;">...</div>
<div class="t" style="left:313px;top:592.30px;font:400 12.6px/20px 'Liberation Mono','Noto Sans CJK SC',monospace;color:#000;letter-spacing:0.406px;">起始地址</div>
<div class="a" style="left:371px;top:586px;width:61px;height:30px;background:#f0f0ed;border:1px solid #c9c9c9;box-shadow:inset 0 0 0 1px #fafaf8;"></div>
<div class="t" style="left:372.5px;top:592.60px;font:400 11.67px/20px 'Liberation Mono','Noto Sans CJK SC',monospace;color:#8c8c8c;transform:scaleY(1.16);transform-origin:0 13.00px;">0x1DA000</div>
<div class="t" style="left:438.5px;top:592.30px;font:400 12.6px/20px 'Liberation Mono','Noto Sans CJK SC',monospace;color:#000;letter-spacing:0.406px;">预留大小</div>
<div class="a" style="left:496px;top:586px;width:62px;height:30px;background:#fefefc;border:1px solid #7a7a7a;"></div>
<div class="t" style="left:499.5px;top:592.60px;font:400 11.67px/20px 'Liberation Mono','Noto Sans CJK SC',monospace;color:#000;transform:scaleY(1.16);transform-origin:0 13.00px;">0x1000</div>
<div class="t" style="left:564.3px;top:592.30px;font:400 12.6px/20px 'Liberation Mono','Noto Sans CJK SC',monospace;color:#000;letter-spacing:0.406px;">当前版本</div>
<div class="a" style="left:622px;top:586px;width:61px;height:30px;background:#fefefc;border:1px solid #7a7a7a;"></div>
<div class="t" style="left:625.5px;top:592.60px;font:400 11.67px/20px 'Liberation Mono','Noto Sans CJK SC',monospace;color:#000;transform:scaleY(1.16);transform-origin:0 13.00px;">100</div>
<div class="a" style="left:689px;top:527px;width:1px;height:128px;background:#a3a3a3;"></div>
<div class="a" style="left:690px;top:527px;width:1px;height:128px;background:#ffffff;"></div>
<div class="a" style="left:313px;top:662px;width:755px;height:1px;background:#a3a3a3;"></div>
<div class="a" style="left:313px;top:663px;width:755px;height:1px;background:#ffffff;"></div>
<div class="t" style="left:698.5px;top:525.80px;font:700 13.5px/20px 'Liberation Sans',sans-serif;color:#000;letter-spacing:0.908px;-webkit-text-stroke:0.700px #000;">ConsumerData (NV data)</div>
<div class="t" style="left:698px;top:556.30px;font:400 12.6px/20px 'Liberation Mono','Noto Sans CJK SC',monospace;color:#000;letter-spacing:0.406px;">起始地址</div>
<div class="a" style="left:756px;top:550px;width:61px;height:30px;background:#f0f0ed;border:1px solid #c9c9c9;box-shadow:inset 0 0 0 1px #fafaf8;"></div>
<div class="t" style="left:757.5px;top:556.60px;font:400 11.67px/20px 'Liberation Mono','Noto Sans CJK SC',monospace;color:#8c8c8c;transform:scaleY(1.16);transform-origin:0 13.00px;">0x3FC000</div>
<div class="t" style="left:823.5px;top:556.30px;font:400 12.6px/20px 'Liberation Mono','Noto Sans CJK SC',monospace;color:#000;letter-spacing:0.406px;">预留大小</div>
<div class="a" style="left:881px;top:550px;width:62px;height:30px;background:#fefefc;border:1px solid #7a7a7a;"></div>
<div class="t" style="left:884.5px;top:556.60px;font:400 11.67px/20px 'Liberation Mono','Noto Sans CJK SC',monospace;color:#000;transform:scaleY(1.16);transform-origin:0 13.00px;">0x4000</div>
<div class="t" style="left:697.5px;top:592.20px;font:400 11.67px/20px 'Liberation Mono','Noto Sans CJK SC',monospace;color:#000;transform:scaleY(1.16);transform-origin:0 13.00px;">Flash</div>
<div class="t" style="left:732.5px;top:592.60px;font:400 13px/20px 'Liberation Mono','Noto Sans CJK SC',monospace;color:#000;letter-spacing:-0.008px;">大小</div>
<div class="t" style="left:758.5px;top:592.20px;font:400 11.67px/20px 'Liberation Mono','Noto Sans CJK SC',monospace;color:#000;transform:scaleY(1.16);transform-origin:0 13.00px;">(MB)</div>
<div class="a" style="left:793px;top:586px;width:69px;height:29px;background:#f8ffc2;border-top:2px solid #6f7048;border-left:2px solid #6f7048;border-right:1px solid #fbffe0;border-bottom:1px solid #fbffe0;"></div>
<div class="a" style="left:845px;top:588px;width:15px;height:26px;background:#f6fdc0;border-left:1px solid #fcffea;border-top:1px solid #fcffea;border-right:2px solid #7d7e58;border-bottom:2px solid #7d7e58;"></div>
<svg class="a" style="left:849px;top:598px" width="8" height="5"><path d="M0 0h7l-3.500 4z" fill="#9a9a9a"/></svg>
<div class="t" style="left:797.5px;top:592.10px;font:400 11.67px/20px 'Liberation Mono','Noto Sans CJK SC',monospace;color:#000;transform:scaleY(1.16);transform-origin:0 13.00px;">4</div>
<div class="a" style="left:315px;top:794px;width:105px;height:30px;background:#e1e1e1;border:1px solid #adadad;"></div>
<div class="t" style="left:318px;top:801.00px;font:400 11.67px/20px 'Liberation Mono','Noto Sans CJK SC',monospace;color:#000;transform:scaleY(1.16);transform-origin:0 13.00px;">CI130X</div>
<div class="t" style="left:360px;top:801.30px;font:400 13px/20px 'Liberation Mono','Noto Sans CJK SC',monospace;color:#000;letter-spacing:-0.008px;">系列</div>
<svg class="a" style="left:405px;top:805px" width="12" height="8"><path d="M1.500 1.500l4.500 4.500 4.500-4.500" stroke="#444" stroke-width="1.100" fill="none"/></svg>
<div class="a" style="left:428px;top:794px;width:105px;height:30px;background:#e1e1e1;border:1px solid #adadad;"></div>
<div class="t" style="left:431px;top:801.00px;font:400 11.67px/20px 'Liberation Mono','Noto Sans CJK SC',monospace;color:#000;transform:scaleY(1.16);transform-origin:0 13.00px;">CI1306</div>
<svg class="a" style="left:518px;top:805px" width="12" height="8"><path d="M1.500 1.500l4.500 4.500 4.500-4.500" stroke="#444" stroke-width="1.100" fill="none"/></svg>
<div class="a" style="left:542px;top:795px;width:78px;height:28px;background:#e1e1e1;border:1px solid #adadad;"></div>
<div class="t" style="left:555.0px;top:799.70px;font:400 13px/20px 'Liberation Sans','Noto Sans CJK SC',sans-serif;color:#000;">恢复默认</div>
<div class="a" style="left:718px;top:795px;width:78px;height:28px;background:#e1e1e1;border:1px solid #adadad;"></div>
<div class="t" style="left:731.0px;top:799.70px;font:400 13px/20px 'Liberation Sans','Noto Sans CJK SC',sans-serif;color:#000;">打包固件</div>
<div class="a" style="left:630px;top:795px;width:78px;height:28px;background:#e1e1e1;border:1px solid #adadad;"></div>
<div class="t" style="left:639px;top:799.70px;font:400 13px/20px 'Liberation Sans','Noto Sans CJK SC',sans-serif;color:#000;">自动分配</div>
<svg class="a" style="left:690px;top:804px" width="10" height="10" viewBox="0 0 10 10"><path d="M3.500 3.500H2.500Q1 3.500 1 5.500V7Q1 9 3 9H6.500Q8.500 9 8.500 7V4.500Q8.500 3.500 7.500 3.500M5 5.500Q7.500 5 7.500 1.500" stroke="#111" stroke-width="1" fill="none"/></svg>
<div class="a" style="left:805px;top:794px;width:80px;height:30px;background:#3bfdc1;border-top:1px solid #c9fff0;border-left:1px solid #c9fff0;border-right:2px solid #2a9b79;border-bottom:2px solid #2a9b79;"></div>
<div class="t" style="left:819px;top:799.70px;font:400 13px/20px 'Liberation Sans','Noto Sans CJK SC',sans-serif;color:#000;">固件升级</div>
<div class="a" style="left:894px;top:795px;width:78px;height:28px;background:#e1e1e1;border:1px solid #adadad;"></div>
<div class="t" style="left:907.0px;top:799.70px;font:400 13px/20px 'Liberation Sans','Noto Sans CJK SC',sans-serif;color:#000;">上级目录</div>
<div class="a" style="left:982px;top:795px;width:78px;height:28px;background:#e1e1e1;border:1px solid #adadad;"></div>
<div class="t" style="left:995.0px;top:799.70px;font:400 13px/20px 'Liberation Sans','Noto Sans CJK SC',sans-serif;color:#000;">退出工具</div>
</body></html>
